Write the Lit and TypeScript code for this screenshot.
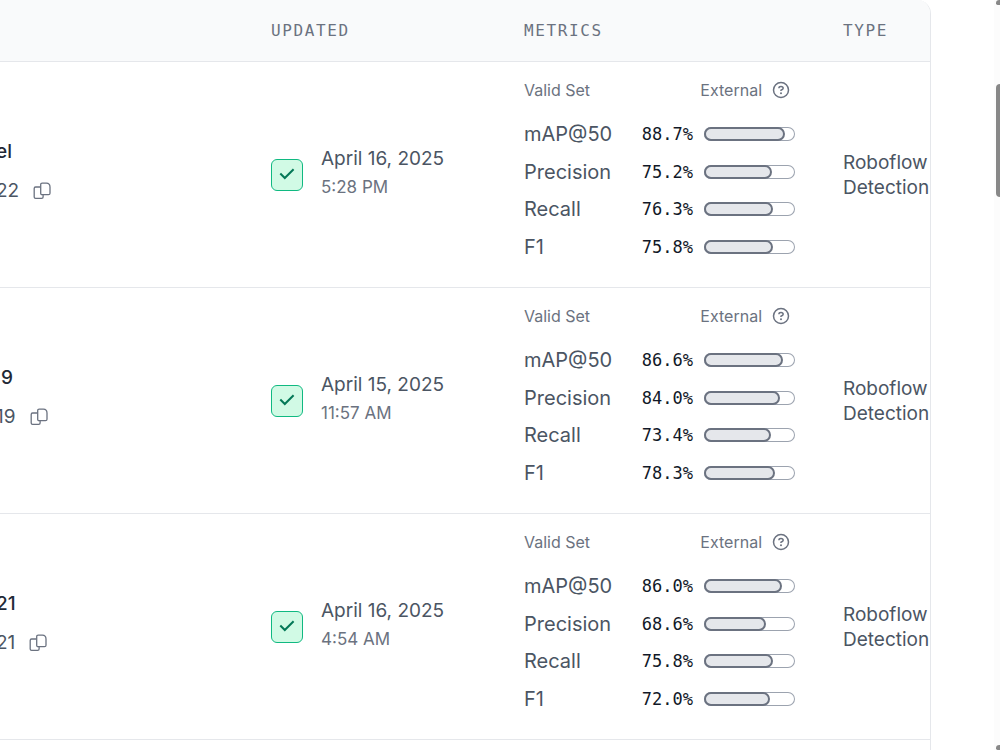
import { LitElement, html, css, svg } from "lit";
import { customElement, property } from "lit/decorators.js";

interface Model {
  name: string;
  id: string;
  date: string;
  time: string;
  metrics: [string, number][];
}

const models: Model[] = [
  {
    name: "el", id: "22", date: "April 16, 2025", time: "5:28 PM",
    metrics: [["mAP@50", 88.7], ["Precision", 75.2], ["Recall", 76.3], ["F1", 75.8]],
  },
  {
    name: " 9", id: "19", date: "April 15, 2025", time: "11:57 AM",
    metrics: [["mAP@50", 86.6], ["Precision", 84.0], ["Recall", 73.4], ["F1", 78.3]],
  },
  {
    name: "21", id: "21", date: "April 16, 2025", time: "4:54 AM",
    metrics: [["mAP@50", 86.0], ["Precision", 68.6], ["Recall", 75.8], ["F1", 72.0]],
  },
];

const copyIcon = svg`<svg width="18" height="18" viewBox="0 0 18 18" fill="none" stroke="currentColor" stroke-width="1.3" aria-hidden="true">
  <path d="M7.300 5H2.600Q1.200 5 1.200 6.400V14.900Q1.200 16.300 2.600 16.300H8.700Q10.100 16.300 10.100 14.900V12.800"/>
  <path d="M9.200 1.200H13.400Q16.900 1.400 17 5V11.200Q17 12.700 15.500 12.700H9.200Q7.700 12.700 7.700 11.200V2.700Q7.700 1.200 9.200 1.200Z"/>
</svg>`;

const helpIcon = svg`<svg width="18" height="18" viewBox="0 0 18 18" fill="none" stroke="currentColor" stroke-width="1.5" aria-hidden="true">
  <circle cx="9" cy="9" r="7.500"/>
  <path d="M6.900 7.200Q6.900 5.500 9 5.500Q11.200 5.500 11.200 7.300Q11.200 8.400 9 9.200V10"/>
  <circle cx="9" cy="12.200" r="1" fill="currentColor" stroke="none"/>
</svg>`;

const checkIcon = svg`<svg width="16" height="16" viewBox="0 0 16 16" fill="none" stroke="currentColor" stroke-width="2" aria-hidden="true">
  <path d="M1.300 6.500L5.800 11L14.600 2.200"/>
</svg>`;

@customElement("metric-bar")
export class MetricBar extends LitElement {
  @property({ type: Number }) value = 0;

  static styles = css`
    :host { display: block; }
    .track {
      box-sizing: border-box;
      height: 14px;
      border-radius: 7px;
      box-shadow: inset 0 0 0 1px #9ca3af;
    }
    .fill {
      box-sizing: border-box;
      height: 14px;
      border: 2px solid #6b7280;
      border-radius: 7px;
      background: #e5e7eb;
    }
  `;

  render() {
    return html`<div class="track"><div class="fill" style="width:${this.value}%"></div></div>`;
  }
}

@customElement("app-root")
export class AppRoot extends LitElement {
  static styles = css`
    :host {
      display: flex;
      height: 100vh;
      overflow: hidden;
      background: #fff;
      color: #4b5563;
      font-family: Inter, sans-serif;
      font-size: 19px;
      line-height: 25px;
    }
    .panel {
      flex: 1;
      min-width: 0;
      margin-right: 69px;
      overflow: hidden;
      border-right: 1px solid #e5e7eb;
      border-top-right-radius: 14px;
    }
    table {
      width: 100%;
      table-layout: fixed;
      border-collapse: separate;
      border-spacing: 0;
    }
    .col-updated { width: 253px; }
    .col-metrics { width: 319px; }
    .col-type { width: 111px; }
    th {
      box-sizing: border-box;
      height: 62px;
      padding: 0 24px;
      background: #f9fafb;
      border-bottom: 1px solid #e5e7eb;
      color: #6b7280;
      font: 400 16px/24px "DejaVu Sans Mono", monospace;
      letter-spacing: 1.6px;
      text-align: left;
    }
    td {
      box-sizing: border-box;
      height: 226px;
      padding: 0 24px;
      border-bottom: 1px solid #e5e7eb;
      vertical-align: middle;
    }
    td.name-cell { padding: 0 0 8px; }
    .name-block { margin-left: -4px; }
    .name {
      color: #1f2937;
      font-weight: 500;
      line-height: 28px;
      white-space: pre;
    }
    .id { display: flex; align-items: center; gap: 14px; padding-top: 12px; }
    button {
      display: flex;
      padding: 0;
      border: 0;
      background: none;
      color: #6b7280;
      cursor: pointer;
    }
    .updated { display: flex; align-items: center; gap: 18px; }
    .status {
      display: flex;
      align-items: center;
      justify-content: center;
      box-sizing: border-box;
      width: 32px;
      height: 32px;
      border: 1px solid #10b981;
      border-radius: 6px;
      background: #d1fae5;
      color: #047857;
    }
    .stamp { padding-bottom: 3px; }
    .date { line-height: 28px; }
    .time { color: #6b7280; font-size: 17px; line-height: 28px; }
    td.metrics-cell { padding-top: 16px; vertical-align: top; }
    .sets {
      display: flex;
      justify-content: space-between;
      align-items: center;
      padding-right: 5px;
      margin-bottom: 18px;
      color: #6b7280;
      font-size: 16px;
      line-height: 24px;
    }
    .external { display: flex; align-items: center; gap: 10px; }
    .metrics {
      display: grid;
      align-content: space-between;
      min-height: 141px;
    }
    .metric {
      display: grid;
      grid-template-columns: 1fr auto 91px;
      align-items: center;
      column-gap: 11px;
      font-size: 20px;
      line-height: 28px;
    }
    .value {
      color: #111827;
      font: 17px/28px "DejaVu Sans Mono", monospace;
    }
    td.type { padding-right: 0; }
    .scroll {
      display: flex;
      flex-direction: column;
      justify-content: space-between;
      position: fixed;
      top: 0;
      bottom: 0;
      right: 0;
      width: 6px;
      background: #fcfcfc;
    }
    .thumb {
      height: 15%;
      margin: 79px 0 auto 2px;
      border-radius: 6px 0 0 6px;
      background: #888;
    }
    .cap { height: 5px; margin-left: 2px; background: #888; border-radius: 4px 0 0 2px; }
  `;

  render() {
    return html`
      <main class="panel">
        <table>
          <colgroup>
            <col />
            <col class="col-updated" />
            <col class="col-metrics" />
            <col class="col-type" />
          </colgroup>
          <thead>
            <tr><th></th><th>UPDATED</th><th>METRICS</th><th>TYPE</th></tr>
          </thead>
          <tbody>${models.map((m) => this.row(m))}</tbody>
        </table>
      </main>
      <div class="scroll" aria-hidden="true">
        <div class="cap"></div>
        <div class="thumb"></div>
        <div class="cap"></div>
      </div>
    `;
  }

  private row(m: Model) {
    return html`<tr>
      <td class="name-cell">
        <div class="name-block">
          <div class="name">${m.name}</div>
          <div class="id"><span>${m.id}</span><button type="button" aria-label="Copy">${copyIcon}</button></div>
        </div>
      </td>
      <td>
        <div class="updated">
          <span class="status">${checkIcon}</span>
          <div class="stamp"><div class="date">${m.date}</div><div class="time">${m.time}</div></div>
        </div>
      </td>
      <td class="metrics-cell">
        <div class="sets">
          <span>Valid Set</span>
          <span class="external">External <button type="button" aria-label="Help">${helpIcon}</button></span>
        </div>
        <div class="metrics">
          ${m.metrics.map(([label, value]) => html`<div class="metric">
            <span>${label}</span>
            <span class="value">${value.toFixed(1)}%</span>
            <metric-bar .value=${value}></metric-bar>
          </div>`)}
        </div>
      </td>
      <td class="type">Roboflow Detection</td>
    </tr>`;
  }
}
